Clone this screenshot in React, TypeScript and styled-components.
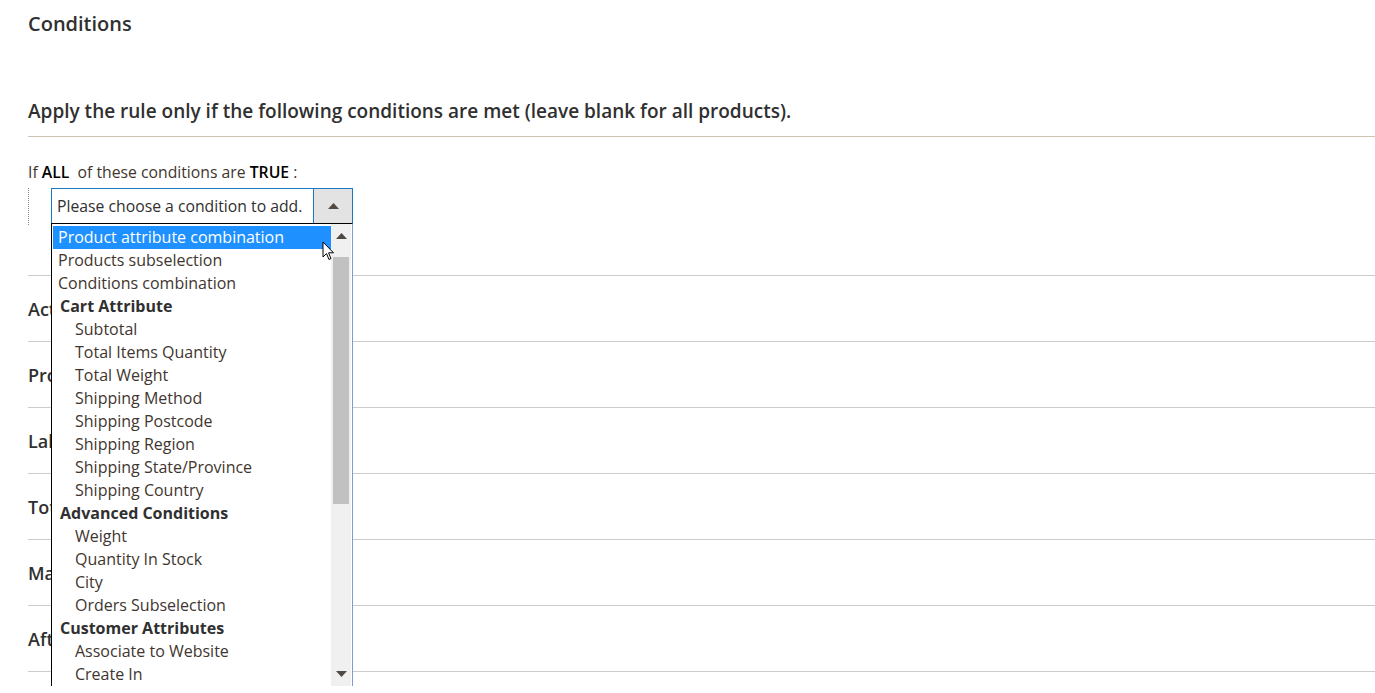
import styled, { createGlobalStyle } from 'styled-components';

const GlobalStyle = createGlobalStyle`
  html, body {
    margin: 0;
    padding: 0;
    overflow: hidden;
    background: #ffffff;
    font-family: 'Open Sans', 'Noto Sans', sans-serif;
    color: #303030;
  }
`;

const Page = styled.div`
  padding: 0 0 0 28px;
  height: 693px;
  overflow: hidden;
`;

const PageTitle = styled.h2`
  margin: 0;
  padding-top: 12px;
  font-size: 20px;
  line-height: 24px;
  font-weight: 600;
  color: #303030;
`;

const Legend = styled.div`
  margin-top: 63px;
  padding-bottom: 13px;
  border-bottom: 1px solid #cdc3b3;
  font-size: 19px;
  line-height: 24px;
  font-weight: 600;
  color: #303030;
`;

const RuleLine = styled.div`
  margin-top: 24px;
  font-size: 15.75px;
  line-height: 22px;
  color: #41362f;

  b {
    font-weight: 600;
    color: #000;
  }
`;

const RuleTree = styled.div`
  margin-top: 5px;
  padding: 0 0 0 22px;
  border-left: 1px dotted #8a8a8a;
  height: 37px;
`;

const SelectWrap = styled.div`
  position: relative;
  width: 302px;
`;

const SelectBox = styled.div`
  display: flex;
  height: 36px;
  box-sizing: border-box;
  border: 1px solid #1979c3;
  background: #fff;
`;

const SelectText = styled.div`
  flex: 1;
  padding: 0 5px;
  display: flex;
  align-items: center;
  font-size: 15.75px;
  white-space: nowrap;
  color: #303030;
`;

const SelectButton = styled.div`
  width: 38px;
  border-left: 1px solid #1979c3;
  background: #e3e3e3;
  display: flex;
  align-items: center;
  justify-content: center;
`;

const Dropdown = styled.div`
  position: absolute;
  top: 35px;
  left: 0;
  width: 302px;
  height: 463px;
  overflow: hidden;
  box-sizing: border-box;
  border-top: 1px solid #000;
  border-left: 1px solid #000;
  border-right: 1px solid #7a9cd9;
  background: #fff;
  display: flex;
  z-index: 5;
`;

const OptionList = styled.div`
  flex: 1;
  padding: 2px 0 0 1px;
`;

const Option = styled.div<{ $level: number; $active?: boolean; $group?: boolean }>`
  height: 23px;
  line-height: 23px;
  font-size: 16px;
  white-space: nowrap;
  padding-left: ${(p) => (p.$group ? 7 : p.$level ? 22 : 5)}px;
  font-weight: ${(p) => (p.$group ? 700 : 400)};
  background: ${(p) => (p.$active ? '#1e90ff' : 'transparent')};
  color: ${(p) => (p.$active ? '#ffffff' : p.$group ? '#303030' : '#41362f')};
`;

const Scrollbar = styled.div`
  width: 20px;
  margin-right: 1px;
  background: #f0f0f0;
  display: flex;
  flex-direction: column;
  align-items: center;
`;

const ScrollArrow = styled.div`
  height: 24px;
  display: flex;
  align-items: center;
  justify-content: center;
  width: 100%;
`;

const ScrollThumb = styled.div`
  margin-top: 9px;
  width: 16px;
  height: 247px;
  background: #c1c1c1;
`;

const ScrollSpacer = styled.div`
  flex: 1;
`;

const Cursor = styled.svg`
  position: absolute;
  left: 271px;
  top: 53px;
  z-index: 6;
`;

const Sections = styled.div`
  margin-top: 50px;
`;

const Section = styled.div`
  border-top: 1px solid #cccccc;
  height: 65px;
  display: flex;
  align-items: center;
  font-size: 18px;
  font-weight: 600;
  color: #303030;
`;

const options: { label: string; level: number; group?: boolean; active?: boolean }[] = [
  { label: 'Product attribute combination', level: 0, active: true },
  { label: 'Products subselection', level: 0 },
  { label: 'Conditions combination', level: 0 },
  { label: 'Cart Attribute', level: 0, group: true },
  { label: 'Subtotal', level: 1 },
  { label: 'Total Items Quantity', level: 1 },
  { label: 'Total Weight', level: 1 },
  { label: 'Shipping Method', level: 1 },
  { label: 'Shipping Postcode', level: 1 },
  { label: 'Shipping Region', level: 1 },
  { label: 'Shipping State/Province', level: 1 },
  { label: 'Shipping Country', level: 1 },
  { label: 'Advanced Conditions', level: 0, group: true },
  { label: 'Weight', level: 1 },
  { label: 'Quantity In Stock', level: 1 },
  { label: 'City', level: 1 },
  { label: 'Orders Subselection', level: 1 },
  { label: 'Customer Attributes', level: 0, group: true },
  { label: 'Associate to Website', level: 1 },
  { label: 'Create In', level: 1 },
];

const sections = ['Actions', 'Products', 'Labels', 'Totals', 'Manage Coupons', 'After Apply'];

const Triangle = ({ up }: { up: boolean }) => (
  <svg width="11" height="6" viewBox="0 0 11 6">
    <path d={up ? 'M0 6 L5.5 0 L11 6 Z' : 'M0 0 L5.5 6 L11 0 Z'} fill="#514943" />
  </svg>
);

export default function App() {
  return (
    <>
      <GlobalStyle />
      <Page>
        <PageTitle>Conditions</PageTitle>
        <Legend>Apply the rule only if the following conditions are met (leave blank for all products).</Legend>
        <RuleLine>
          If <b>ALL</b>&nbsp; of these conditions are <b>TRUE</b> :
        </RuleLine>
        <RuleTree>
          <SelectWrap>
            <SelectBox>
              <SelectText>Please choose a condition to add.</SelectText>
              <SelectButton>
                <Triangle up />
              </SelectButton>
            </SelectBox>
            <Dropdown>
              <OptionList>
                {options.map((o) => (
                  <Option key={o.label} $level={o.level} $group={o.group} $active={o.active}>
                    {o.label}
                  </Option>
                ))}
              </OptionList>
              <Scrollbar>
                <ScrollArrow>
                  <Triangle up />
                </ScrollArrow>
                <ScrollThumb />
                <ScrollSpacer />
                <ScrollArrow>
                  <Triangle up={false} />
                </ScrollArrow>
              </Scrollbar>
            </Dropdown>
            <Cursor width="13" height="21" viewBox="0 0 13 21">
              <path d="M1 1 L1 16 L4.5 12.5 L7 18.5 L9 17.6 L6.6 11.8 L11.5 11.8 Z" fill="#fff" stroke="#000" strokeWidth="1" strokeLinejoin="round" />
            </Cursor>
          </SelectWrap>
        </RuleTree>
        <Sections>
          {sections.map((s) => (
            <Section key={s}>{s}</Section>
          ))}
          <Section />
        </Sections>
      </Page>
    </>
  );
}
